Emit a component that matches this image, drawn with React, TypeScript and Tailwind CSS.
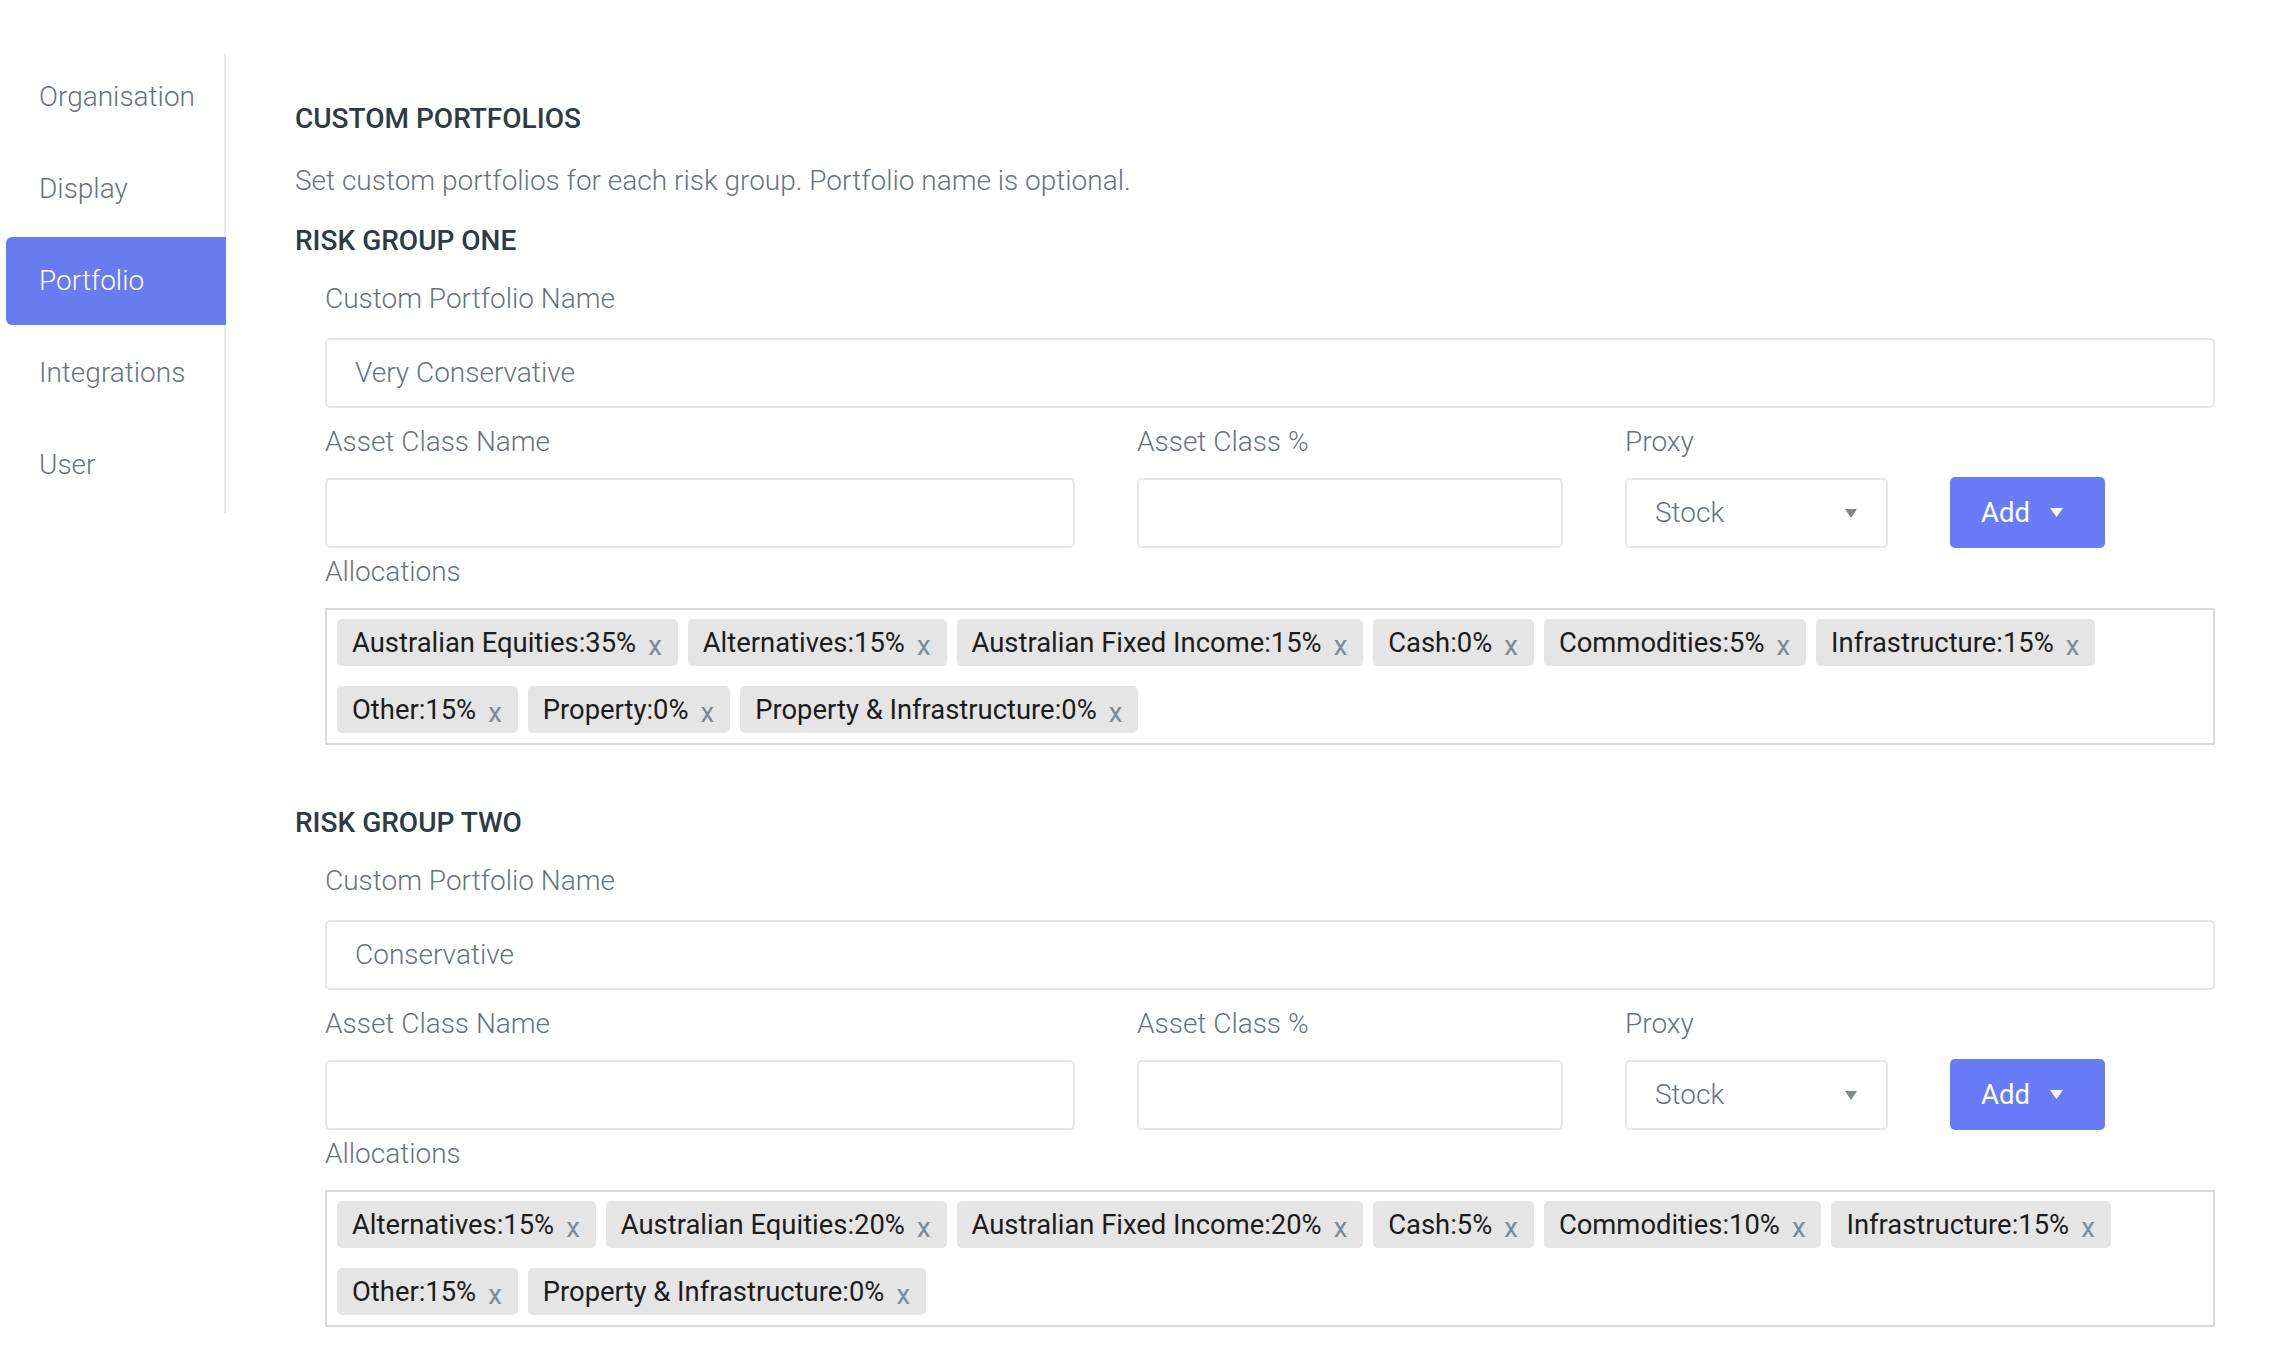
import React from "react";

const navItems = ["Organisation", "Display", "Portfolio", "Integrations", "User"];

type Group = {
  title: string;
  name: string;
  tags: string[];
};

const groups: Group[] = [
  {
    title: "RISK GROUP ONE",
    name: "Very Conservative",
    tags: [
      "Australian Equities:35%",
      "Alternatives:15%",
      "Australian Fixed Income:15%",
      "Cash:0%",
      "Commodities:5%",
      "Infrastructure:15%",
      "Other:15%",
      "Property:0%",
      "Property & Infrastructure:0%",
    ],
  },
  {
    title: "RISK GROUP TWO",
    name: "Conservative",
    tags: [
      "Alternatives:15%",
      "Australian Equities:20%",
      "Australian Fixed Income:20%",
      "Cash:5%",
      "Commodities:10%",
      "Infrastructure:15%",
      "Other:15%",
      "Property & Infrastructure:0%",
    ],
  },
];

function Tag({ label }: { label: string }) {
  return (
    <div className="h-[47px] flex items-center pl-[15px] pr-[16px] rounded-[5px] bg-[#e5e5e5] text-[#1c1c1c] text-[27.4px] leading-[32px] whitespace-nowrap">
      <span>{label}</span>
      <span className="ml-[12px] text-[#7c8a96] relative top-[3px]">x</span>
    </div>
  );
}

function RiskGroup({ group, first }: { group: Group; first: boolean }) {
  return (
    <section className={first ? "mt-[28px]" : "mt-[62px]"}>
      <h3 className="text-[28px] leading-[32px] font-medium text-[#2d3b45]">{group.title}</h3>
      <div className="pl-[30px]">
        <div className="mt-[26px] text-[28px] font-light leading-[32px] text-[#66737f]">Custom Portfolio Name</div>
        <div className="mt-[23px] h-[70px] border-2 border-[#e3e8ec] rounded-[5px] flex items-center pl-[28px] text-[28px] font-light text-[#66737f]">
          {group.name}
        </div>
        <div className="mt-[18px] grid grid-cols-[750px_426px_263px_155px] gap-x-[62px] gap-y-[20px] text-[28px] font-light leading-[32px] text-[#66737f]">
          <div>Asset Class Name</div>
          <div>Asset Class %</div>
          <div>Proxy</div>
          <div></div>
          <div className="h-[70px] border-2 border-[#e3e8ec] rounded-[5px] bg-white"></div>
          <div className="h-[70px] border-2 border-[#e3e8ec] rounded-[5px] bg-white"></div>
          <div className="h-[70px] border-2 border-[#e3e8ec] rounded-[5px] bg-white flex items-center justify-between pl-[28px] pr-[29px]">
            <span>Stock</span>
            <svg width="12" height="9" viewBox="0 0 12 9">
              <path d="M0 0 L12 0 L6 9 Z" fill="#7f888b" />
            </svg>
          </div>
          <button className="h-[71px] -mt-[1px] rounded-[5px] bg-[#697cf8] text-white text-[27.5px] font-normal flex items-center pl-[31px]">
            <span>Add</span>
            <svg className="ml-[20px]" width="13" height="9" viewBox="0 0 13 9">
              <path d="M0 0 L13 0 L6.5 9 Z" fill="#ffffff" />
            </svg>
          </button>
        </div>
        <div className="mt-[8px] text-[28px] font-light leading-[32px] text-[#66737f]">Allocations</div>
        <div className="mt-[20px] border-2 border-[#dadada] pt-[9px] pb-[10px] pl-[10px] pr-[10px] flex flex-wrap gap-x-[10px] gap-y-[20px]">
          {group.tags.map((t) => (
            <Tag key={t} label={t} />
          ))}
        </div>
      </div>
    </section>
  );
}

export default function App() {
  return (
    <div className="flex min-h-screen bg-white font-['Roboto',sans-serif]">
      <aside className="w-[226px] shrink-0 pt-[53px]">
        <nav className="border-r-2 border-[#e7ebee] pb-[4px] flex flex-col gap-[4px]">
          {navItems.map((item) => {
            const active = item === "Portfolio";
            return (
              <div
                key={item}
                className={
                  active
                    ? "ml-[6px] -mr-[2px] h-[88px] flex items-center pl-[33px] rounded-l-[6px] bg-[#687cf0] text-white text-[28px] font-light"
                    : "ml-[6px] h-[88px] flex items-center pl-[33px] text-[#66737f] text-[28px] font-light"
                }
              >
                {item}
              </div>
            );
          })}
        </nav>
      </aside>
      <main className="flex-1 pl-[69px] pr-[55px] pt-[103px] pb-[40px]">
        <h2 className="text-[28px] leading-[32px] font-medium text-[#2d3b45]">CUSTOM PORTFOLIOS</h2>
        <p className="mt-[30px] text-[28px] font-light leading-[32px] text-[#66737f]">
          Set custom portfolios for each risk group. Portfolio name is optional.
        </p>
        {groups.map((g, i) => (
          <RiskGroup key={g.title} group={g} first={i === 0} />
        ))}
      </main>
    </div>
  );
}
